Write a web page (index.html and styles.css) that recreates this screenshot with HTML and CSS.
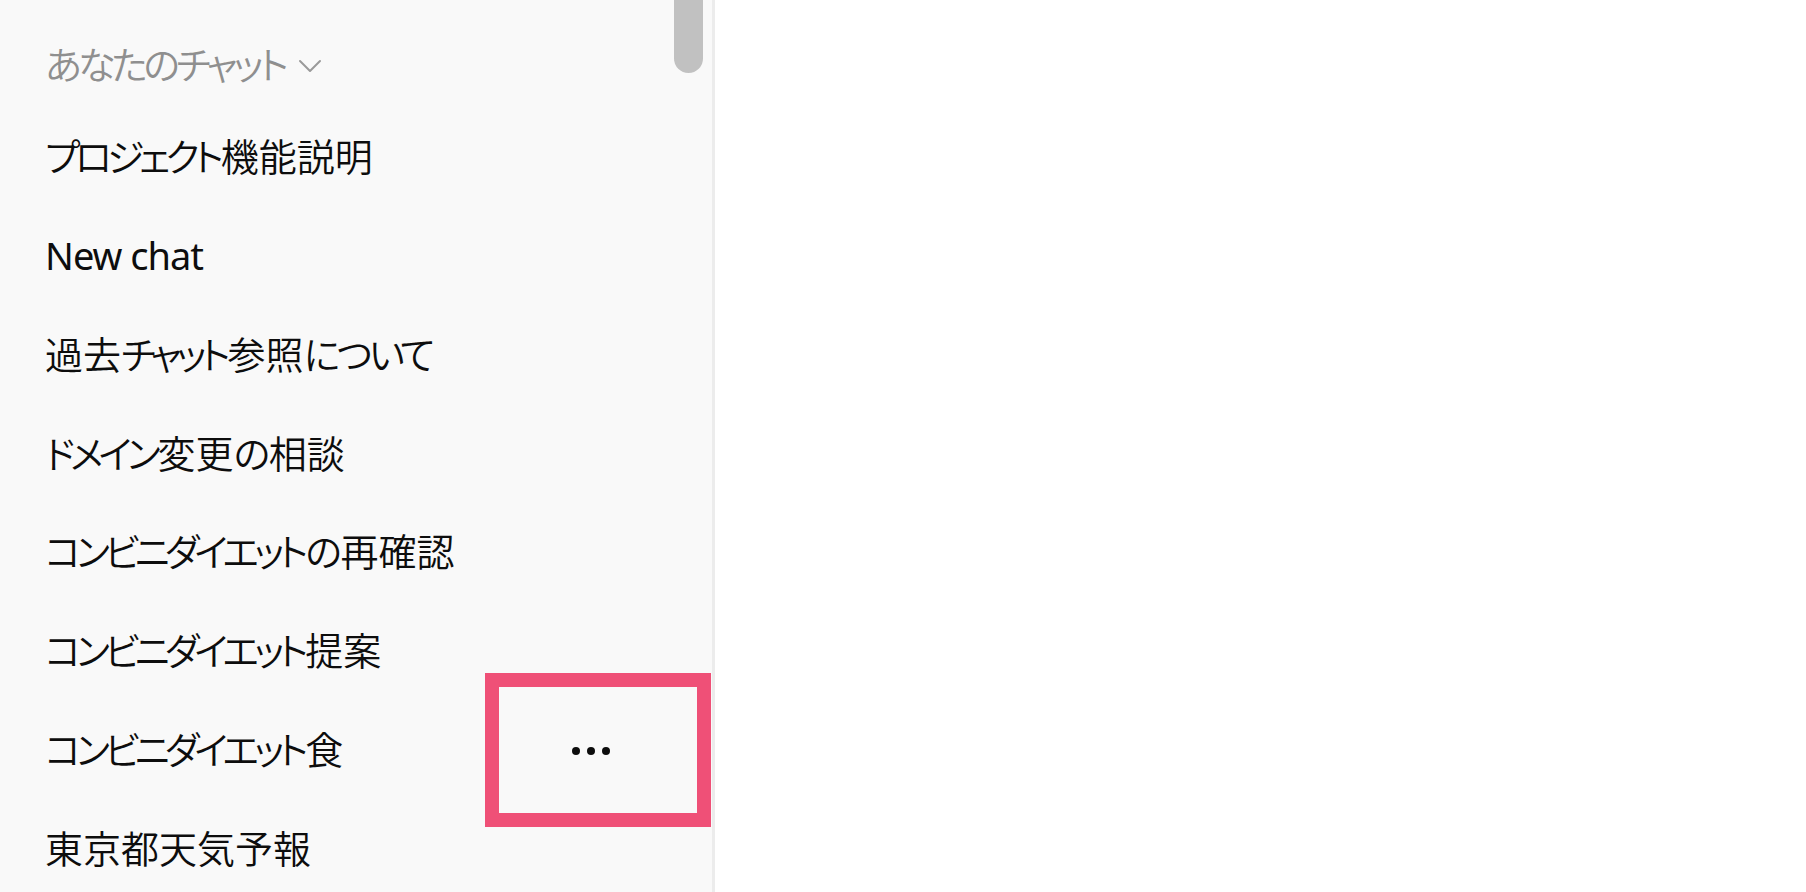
FILE: index.html
```html
<!DOCTYPE html>
<html lang="ja">
<head>
<meta charset="utf-8">
<title>あなたのチャット</title>
<link rel="stylesheet" href="styles.css">
</head>
<body>
<div class="app">
  <nav class="sidebar">
    <div class="scroll-thumb"></div>
    <div class="section-title">
      <span class="title-text">あなたのチャット</span>
      <svg class="chevron" width="24" height="14" viewBox="0 0 24 14" aria-hidden="true">
        <path d="M2 2 L12 12 L22 2" fill="none" stroke="#9a9a9a" stroke-width="2" stroke-linecap="round" stroke-linejoin="round"/>
      </svg>
    </div>
    <ul class="chat-list">
      <li class="chat-item"><span class="ka">プロジェクト</span>機能説明</li>
      <li class="chat-item latin">New chat</li>
      <li class="chat-item">過去<span class="ka">チャット</span>参照<span class="hi">について</span></li>
      <li class="chat-item"><span class="ka">ドメイン</span>変更<span class="hi">の</span>相談</li>
      <li class="chat-item"><span class="ka">コンビニダイエット</span><span class="hi">の</span>再確認</li>
      <li class="chat-item"><span class="ka">コンビニダイエット</span>提案</li>
      <li class="chat-item is-hover">
        <span class="ka">コンビニダイエット</span>食
        <button class="more-btn" type="button" aria-label="その他">
          <svg width="38" height="10" viewBox="0 0 38 10" aria-hidden="true">
            <circle cx="4" cy="5" r="4" fill="#0d0d0d"/>
            <circle cx="19" cy="5" r="4" fill="#0d0d0d"/>
            <circle cx="34" cy="5" r="4" fill="#0d0d0d"/>
          </svg>
        </button>
        <span class="highlight-box"></span>
      </li>
      <li class="chat-item">東京都天気予報</li>
    </ul>
  </nav>
  <main class="main"></main>
</div>
</body>
</html>
```

FILE: styles.css
```css
html, body {
  margin: 0;
  padding: 0;
  height: 100%;
}

body {
  font-family: "Noto Sans", "Noto Sans CJK JP", sans-serif;
  font-feature-settings: "palt";
  background: #ffffff;
  overflow: hidden;
}

.app {
  display: flex;
  height: 100vh;
}

.sidebar {
  position: relative;
  width: 712px;
  flex: 0 0 712px;
  background: #f9f9f9;
  border-right: 3px solid #ececec;
  overflow: hidden;
  padding-top: 41px;
  box-sizing: content-box;
}

.scroll-thumb {
  position: absolute;
  left: 674px;
  top: -20px;
  width: 29px;
  height: 93px;
  border-radius: 15px;
  background: #c1c1c1;
}

.section-title {
  display: flex;
  align-items: center;
  height: 46px;
  padding-left: 45px;
  font-size: 38px;
  line-height: 46px;
  font-weight: 350;
  color: #8f8f8f;
}

.title-text {
  letter-spacing: -4px;
}

.chevron {
  margin-left: 13px;
  margin-top: 4px;
}

.chat-list {
  list-style: none;
  margin: 20px 0 0;
  padding: 0;
}

.chat-item {
  position: relative;
  display: flex;
  align-items: center;
  height: 98.75px;
  padding-left: 45px;
  font-size: 38px;
  line-height: 46px;
  font-weight: 350;
  color: #0d0d0d;
  white-space: nowrap;
}

.chat-item.latin {
  font-weight: 400;
  letter-spacing: -1px;
}

.ka {
  letter-spacing: -5px;
  padding-right: 2px;
}

.hi {
  letter-spacing: -3.5px;
  padding-right: 2px;
}

.more-btn {
  position: absolute;
  left: 572px;
  top: 46px;
  width: 38px;
  height: 10px;
  padding: 0;
  border: 0;
  background: transparent;
  display: block;
}

.more-btn svg {
  display: block;
}

.highlight-box {
  position: absolute;
  left: 485px;
  top: -27px;
  width: 226px;
  height: 154px;
  border: 14px solid #ef5077;
  box-sizing: border-box;
}

.main {
  flex: 1;
  background: #ffffff;
}
```
